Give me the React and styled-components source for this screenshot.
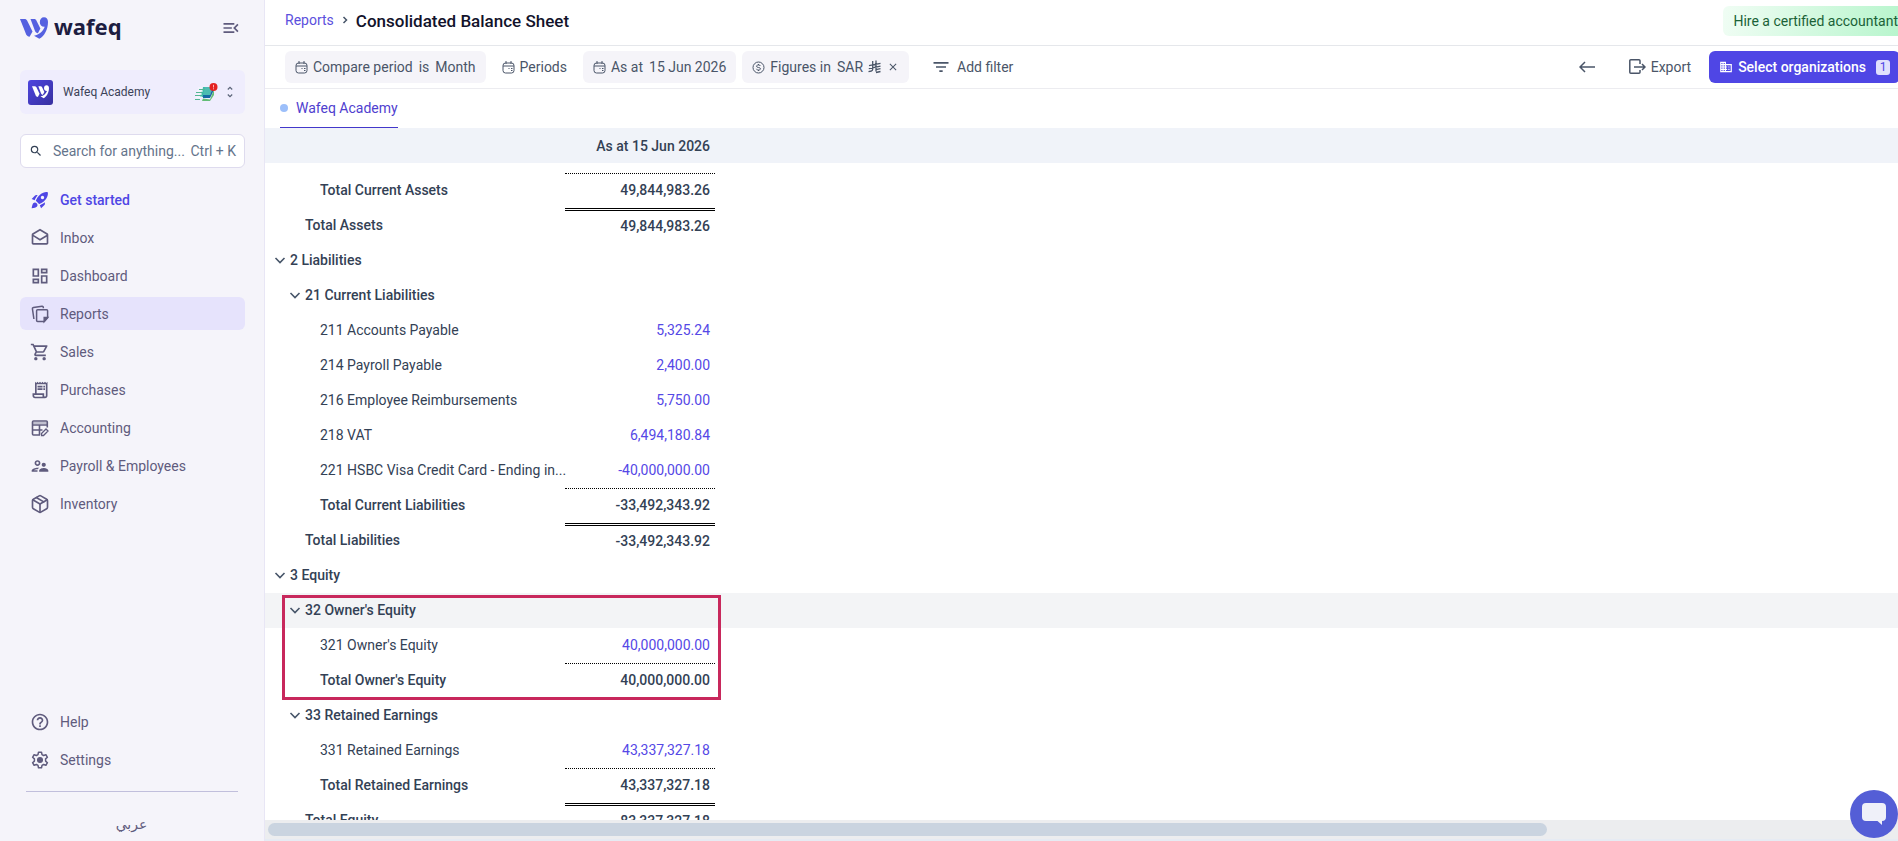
import React, { useLayoutEffect, useRef } from "react";
import styled, { createGlobalStyle, css } from "styled-components";
import {
  MdRocketLaunch,
  MdOutlineDrafts,
  MdOutlineDashboard,
  MdOutlineShoppingCart,
  MdOutlineReceiptLong,
  MdOutlineSupervisorAccount,
  MdHelpOutline,
  MdMenuOpen,
  MdSearch,
  MdFilterList,
  MdDomain,
  MdClose,
} from "react-icons/md";
import { Package } from "lucide-react";

const FONT = 'Roboto, "Liberation Sans", "DejaVu Sans", sans-serif';

const GlobalStyle = createGlobalStyle`
  *, *::before, *::after { box-sizing: border-box; }
  body { margin: 0; background: #fff; overflow: hidden; font: 400 14px/20px ${FONT}; color: #334155; }
  button, input { font: inherit; color: inherit; margin: 0; }
  button { border: 0; background: none; padding: 0; cursor: pointer; }
  a { text-decoration: none; color: inherit; }
  svg { display: block; flex: none; }
`;

const Page = styled.div`
  display: flex;
  height: 100vh;
`;

/* ---------- sidebar ---------- */

const Sidebar = styled.aside`
  flex: none;
  width: 265px;
  display: flex;
  flex-direction: column;
  padding: 0 19px 0 20px;
  background: #f5f4fa;
  border-right: 1px solid #e8e6f5;
  color: #5f5b7d;
`;

const BrandRow = styled.div`
  display: flex;
  align-items: center;
  height: 56px;
  margin-bottom: 14px;
`;

const BrandName = styled.span`
  flex: 1;
  margin-left: 6px;
  padding-bottom: 4px;
  font: 700 22px/28px "Noto Sans", sans-serif;
  color: #1d1d41;
`;

const IconButton = styled.button`
  display: grid;
  place-items: center;
  width: 28px;
  height: 28px;
`;

const Organization = styled.button`
  display: flex;
  align-items: center;
  gap: 6px;
  height: 44px;
  padding: 0 9px 0 8px;
  border-radius: 6px;
  background: #efedfd;
  text-align: left;
  font-size: 12px;
  color: #3b4258;
`;

const OrganizationLogo = styled.span`
  display: grid;
  place-items: center;
  width: 25px;
  height: 25px;
  border-radius: 3px;
  background: linear-gradient(135deg, #4d43e0, #37309f);
`;

const OrganizationName = styled.span`
  flex: 1;
  margin-left: 4px;
`;

const SearchBox = styled.label`
  display: flex;
  align-items: center;
  height: 34px;
  margin: 20px 0 15px;
  padding: 0 8px;
  border: 1px solid #dedbee;
  border-radius: 6px;
  background: #fff;
  color: #64748b;
`;

const SearchInput = styled.input`
  flex: 1;
  min-width: 0;
  margin-left: 10px;
  padding: 0;
  border: 0;
  outline: 0;
  background: none;
  &::placeholder { color: #64748b; opacity: 1; }
`;

const Shortcut = styled.kbd`
  font: inherit;
`;

const Nav = styled.nav`
  display: flex;
  flex-direction: column;
  gap: 5px;
`;

const NavItem = styled.a`
  display: flex;
  align-items: center;
  gap: 10px;
  height: 33px;
  padding: 0 10px;
  border-radius: 6px;
  ${(p) => p.$selected && css`background: #e6e3fc;`}
  ${(p) => p.$accent && css`color: #4f46e5; font-weight: 500;`}
`;

const Divider = styled.hr`
  margin: 15px 6px;
  border: 0;
  border-top: 1px solid #c1bfdc;
  width: 212px;
`;

const LanguageLink = styled.a`
  height: 34px;
  padding-top: 7px;
  margin-right: 2px;
  text-align: center;
  font-family: "DejaVu Sans", sans-serif;
`;

/* ---------- main area ---------- */

const Main = styled.main`
  flex: 1;
  min-width: 0;
  display: flex;
  flex-direction: column;
  overflow: hidden;
`;

const TopBar = styled.header`
  display: flex;
  align-items: center;
  gap: 6px;
  height: 46px;
  padding: 0 0 5px 20px;
  border-bottom: 1px solid #e5e7eb;
  color: #334155;
`;

const Crumb = styled.a`
  color: #5b50dd;
`;

const Title = styled.h1`
  flex: 1;
  margin: 0;
  padding-top: 2px;
  font: 500 17px/24px ${FONT};
  color: #12132b;
`;

const HireButton = styled.button`
  flex: none;
  height: 30px;
  padding: 0 10px;
  margin: 2px -10px 0 0;
  border-radius: 6px;
  background: linear-gradient(100deg, #f0fdf4, #b5f5cb);
  color: #1a6237;
`;

const FilterBar = styled.div`
  display: flex;
  justify-content: space-between;
  align-items: center;
  height: 43px;
  padding-left: 20px;
  border-bottom: 1px solid #ececf0;
  color: #4a5568;
`;

const ChipGroup = styled.div`
  display: flex;
  gap: ${(p) => p.$gap}px;
`;

const Chip = styled.button`
  display: flex;
  align-items: center;
  gap: 6px;
  height: 32px;
  padding: 0 10px;
  border-radius: 6px;
  background: ${(p) => (p.$filled ? "#f5f4f9" : "transparent")};
  white-space: nowrap;
`;

const AddFilter = styled(Chip)`
  padding-left: 16px;
`;

const BackChip = styled(Chip)`
  padding: 0 16px;
`;

const WithIcon = styled.span`
  display: flex;
  align-items: center;
  gap: 5px;
`;

const Spacer = styled.div`
  flex: 1;
`;

const PrimaryButton = styled.button`
  flex: none;
  display: flex;
  align-items: center;
  gap: 5px;
  height: 32px;
  padding: 0 10px;
  margin-right: -2px;
  border-radius: 6px;
  background: #4f46e5;
  color: #fff;
  font-weight: 500;
`;

const CountBadge = styled.span`
  width: 14px;
  margin-left: 5px;
  border-radius: 3px;
  background: #e0e0fd;
  color: #4f46e5;
  font: 400 12px/15px ${FONT};
  text-align: center;
`;

const Tabs = styled.div`
  display: flex;
  height: 39px;
  padding-left: 15px;
`;

const Tab = styled.a`
  display: flex;
  align-items: center;
  gap: 8px;
  border-bottom: 1px solid #4338ca;
  color: #4f40cf;
`;

const Dot = styled.span`
  width: 8px;
  height: 8px;
  border-radius: 50%;
  background: #9cbffa;
`;

/* ---------- report ---------- */

const ReportScroller = styled.div`
  flex: 1;
  min-height: 0;
  overflow: auto;
  scrollbar-width: none;
`;

const Report = styled.table`
  width: 100%;
  table-layout: fixed;
  border-collapse: separate;
  border-spacing: 0;
`;

const HeadCell = styled.th`
  position: sticky;
  top: 0;
  z-index: 2;
  height: 35px;
  padding: 0 5px;
  background: #f0f3f9;
  font-weight: 500;
  text-align: right;
`;

const Row = styled.tr`
  font-weight: ${(p) => (p.$bold ? 500 : 400)};
  background: ${(p) => (p.$hovered ? "#f3f4f6" : "#fff")};
`;

const LabelCell = styled.th`
  position: relative;
  height: 35px;
  padding: 0 0 2px ${(p) => 9 + p.$level * 15}px;
  font-weight: inherit;
  text-align: left;
`;

const Label = styled.div`
  display: flex;
  align-items: center;
  gap: 4px;
  padding-left: ${(p) => (p.$open ? 0 : 16)}px;
  white-space: nowrap;
`;

const Toggle = styled.button`
  width: 12px;
  height: 12px;
  color: #475569;
`;

const rules = {
  dotted: "1px dotted #000",
  double: "3px double #000",
};

const AmountCell = styled.td`
  height: 35px;
  padding: 0 5px 2px;
  border-top: ${(p) => rules[p.$rule] || 0};
  text-align: right;
`;

const AmountLink = styled.a`
  color: #5548e6;
`;

const Highlight = styled.span`
  position: absolute;
  z-index: 1;
  top: 2px;
  left: 17px;
  width: 439px;
  height: 105px;
  border: 3px solid #c8285c;
  pointer-events: none;
`;

const ScrollTrack = styled.div`
  flex: none;
  height: 21px;
  padding: 3px;
  background: #ecedef;
  border-bottom: 2px solid #e6ebf3;
`;

const ScrollThumb = styled.div`
  width: calc(79% - 6px);
  height: 13px;
  border-radius: 7px;
  background: #cad4e0;
`;

const ChatButton = styled.button`
  position: fixed;
  right: 0;
  bottom: 3px;
  z-index: 3;
  display: grid;
  place-items: center;
  width: 48px;
  height: 48px;
  border-radius: 50%;
  background: #545ed6;
`;

/* ---------- drawings ---------- */

const WafeqMark = ({ width, color }) => (
  <svg width={width} viewBox="0 0 28 22" fill={color} aria-hidden="true">
    <path d="M0 2h4.500c1.300 0 2.100.6 2.700 1.800l5.300 10.700-2.900 5.200C7.900 19.600 6.900 18.900 6.100 17.300z" />
    <path d="M10.500 2h3.700c1.100 0 1.700.5 2.200 1.500l4 8-2.500 4.700c-1.400-.1-2.200-.8-2.900-2.200z" />
    <path d="M24 0.300C26.500 0.300 28 2 28 5c0 7.500-3.800 14.500-8.700 16.700l-5.300-3c5.300-1 9.300-4.600 10.700-8.900-2.900.2-4.900-1.700-4.900-4.500 0-3 1.600-5 4.200-5z" />
  </svg>
);

const FastBox = () => (
  <svg width="23" height="19" viewBox="0 0 23 19" aria-hidden="true">
    <path d="M8 4h10l-4 10H5z" fill="#3fb9a8" />
    <path d="M10 4h8l-3 8H8z" fill="#4cbcb2" />
    <path d="M8 12h7l3-8 1 3-4 8H8z" fill="#1668a5" />
    <path d="M8 15.500l7 1 4-10v5.500l-4 6H7z" fill="#63bd76" />
    <path d="M3 5h5M2 8h6M3 11h4M1 14h6" stroke="#f5fbfd" strokeWidth="1" />
    <path d="M4 6.500h6M1 9.500h6M0 12.500h6M0 16.500h5" stroke="#54b592" strokeWidth="1" />
    <circle cx="18.500" cy="4" r="4" fill="#e42222" />
    <path d="M18.500 1.800v2.700M18.500 5.300v1" stroke="#ffb4b4" strokeWidth="1" />
  </svg>
);

const SortIcon = () => (
  <svg width="12" height="12" viewBox="0 0 12 12" fill="none" stroke="#5b6478" strokeWidth="1.200" aria-hidden="true">
    <path d="M3.800 3.500L6 1.300l2.200 2.200M3.800 8.500L6 10.700l2.200-2.200" />
  </svg>
);

const ChevronDownIcon = () => (
  <svg width="12" height="12" viewBox="0 0 12 12" fill="none" stroke="currentColor" strokeWidth="1.600" aria-hidden="true">
    <path d="M1.500 4L6 8.500 10.500 4" />
  </svg>
);

const CrumbArrow = () => (
  <svg width="10" height="10" viewBox="0 0 10 10" fill="none" stroke="#475569" strokeWidth="1.500" aria-hidden="true">
    <path d="M3.500 2l3 3-3 3" />
  </svg>
);

const NotesIcon = () => (
  <svg width="20" height="20" viewBox="0 0 20 20" fill="none" stroke="currentColor" strokeWidth="1.500" aria-hidden="true">
    <path d="M3.900 15L2.400 4.700c-.1-.7.300-1.200 1-1.300L12 2.200c.7-.1 1.200.3 1.300 1v1" />
    <path d="M7.600 5.800h9c.6 0 1 .4 1 1v7l-3.400 3.700H7.600c-.6 0-1-.4-1-1V6.800c0-.6.400-1 1-1z" />
    <path d="M17.600 13.600h-3.400v3.900z" fill="currentColor" />
  </svg>
);

const LedgerIcon = () => (
  <svg width="20" height="20" viewBox="0 0 20 20" fill="none" stroke="currentColor" strokeWidth="1.600" aria-hidden="true">
    <path d="M10 17H3.500a1 1 0 0 1-1-1V4a1 1 0 0 1 1-1h12.800a1 1 0 0 1 1 1v5.500M2.500 7h15M2.500 12h10M9.500 7v10" />
    <path d="M3 4h14v2H3z" fill="currentColor" opacity=".35" stroke="none" />
    <path d="M11.500 17.500v-2l4.500-4.500 2 2-4.500 4.500z" strokeWidth="1.300" />
  </svg>
);

const GearIcon = () => (
  <svg width="20" height="20" viewBox="0 0 20 20" fill="none" stroke="currentColor" strokeWidth="1.500" strokeLinejoin="round" aria-hidden="true">
    <path d="M8.500 2.200h3l.5 2.400 1.600.9 2.300-.8 1.500 2.600-1.800 1.600v2.200l1.800 1.600-1.500 2.600-2.300-.8-1.600.9-.5 2.400h-3L8 15.400l-1.600-.9-2.300.8-1.500-2.600 1.800-1.600V8.900L2.600 7.300l1.500-2.600 2.300.8L8 4.600z" />
    <circle cx="10" cy="10" r="2.300" fill="currentColor" />
  </svg>
);

const CalendarIcon = () => (
  <svg width="13" height="14" viewBox="0 0 13 14" fill="none" stroke="currentColor" aria-hidden="true">
    <rect x="1" y="3" width="11" height="10" rx="2.500" />
    <path d="M1 6h11M4 1v3M9 1v3" />
    <path d="M9 8.500h1.500M9 10.500h1.500M6.500 8.500h1" />
  </svg>
);

const CoinIcon = () => (
  <svg width="13" height="14" viewBox="0 0 13 14" fill="none" stroke="currentColor" aria-hidden="true">
    <circle cx="6.500" cy="7.500" r="5.500" />
    <path d="M8.500 6C8.300 5.300 7.500 5 6.500 5s-2 .4-2 1.200c0 1.800 4 .8 4 2.600 0 .8-.9 1.200-2 1.200s-1.900-.4-2.100-1.100M6.500 4v1M6.500 10v1" />
  </svg>
);

const RiyalIcon = () => (
  <svg width="13" height="14" viewBox="0 0 13 14" fill="none" stroke="currentColor" strokeWidth="1.300" role="img" aria-label="Riyal">
    <path d="M4.700 1v8.200c0 1-.3 1.500-1.400 1.800L.5 11.600M8 .5v11M1 5.600L12.500 3.300M.8 8.700L12.500 6.200M8 9.600l4.500-1M8 12.500l4.500-1" />
  </svg>
);

const BackIcon = () => (
  <svg width="16" height="14" viewBox="0 0 16 14" fill="none" stroke="currentColor" strokeWidth="1.500" aria-hidden="true">
    <path d="M16 7H1M6 2L1 7l5 5" />
  </svg>
);

const ExportIcon = () => (
  <svg width="17" height="16" viewBox="0 0 17 16" fill="none" stroke="currentColor" strokeWidth="1.500" aria-hidden="true">
    <path d="M11 5V1.800a1 1 0 0 0-1-1H1.800a1 1 0 0 0-1 1v11.400a1 1 0 0 0 1 1H10a1 1 0 0 0 1-1V11M5 8h11M13 5l3 3-3 3" />
  </svg>
);

const ChatIcon = () => (
  <svg width="24" height="22" viewBox="0 0 24 22" fill="#eff0f9" aria-hidden="true">
    <path d="M4 0h16a4 4 0 0 1 4 4v10a4 4 0 0 1-4 4v4l-4.500-4H4a4 4 0 0 1-4-4V4a4 4 0 0 1 4-4z" />
  </svg>
);

/* ---------- data ---------- */

const NAV = [
  ["Get started", <MdRocketLaunch size={20} />, { $accent: true }],
  ["Inbox", <MdOutlineDrafts size={20} />],
  ["Dashboard", <MdOutlineDashboard size={20} />],
  ["Reports", <NotesIcon />, { $selected: true }],
  ["Sales", <MdOutlineShoppingCart size={20} />],
  ["Purchases", <MdOutlineReceiptLong size={20} />],
  ["Accounting", <LedgerIcon />],
  ["Payroll & Employees", <MdOutlineSupervisorAccount size={20} />],
  ["Inventory", <Package size={20} strokeWidth={2} />],
];

const ROWS = [
  { level: 2, label: "126 Prepayments", amount: "" },
  { level: 2, label: "Total Current Assets", amount: "49,844,983.26", rule: "dotted", bold: true },
  { level: 1, label: "Total Assets", amount: "49,844,983.26", rule: "double", bold: true },
  { level: 0, label: "2 Liabilities", open: true },
  { level: 1, label: "21 Current Liabilities", open: true },
  { level: 2, label: "211 Accounts Payable", amount: "5,325.24" },
  { level: 2, label: "214 Payroll Payable", amount: "2,400.00" },
  { level: 2, label: "216 Employee Reimbursements", amount: "5,750.00" },
  { level: 2, label: "218 VAT", amount: "6,494,180.84" },
  { level: 2, label: "221 HSBC Visa Credit Card - Ending in...", amount: "-40,000,000.00" },
  { level: 2, label: "Total Current Liabilities", amount: "-33,492,343.92", rule: "dotted", bold: true },
  { level: 1, label: "Total Liabilities", amount: "-33,492,343.92", rule: "double", bold: true },
  { level: 0, label: "3 Equity", open: true },
  { level: 1, label: "32 Owner's Equity", open: true, hovered: true, highlight: true },
  { level: 2, label: "321 Owner's Equity", amount: "40,000,000.00" },
  { level: 2, label: "Total Owner's Equity", amount: "40,000,000.00", rule: "dotted", bold: true },
  { level: 1, label: "33 Retained Earnings", open: true },
  { level: 2, label: "331 Retained Earnings", amount: "43,337,327.18" },
  { level: 2, label: "Total Retained Earnings", amount: "43,337,327.18", rule: "dotted", bold: true },
  { level: 1, label: "Total Equity", amount: "83,337,327.18", rule: "double", bold: true },
];

const ReportRow = ({ row }) => (
  <Row $bold={row.bold || row.open} $hovered={row.hovered}>
    <LabelCell scope="row" $level={row.level}>
      <Label $open={row.open}>
        {row.open && (
          <Toggle aria-label={`Collapse ${row.label}`}>
            <ChevronDownIcon />
          </Toggle>
        )}
        {row.label}
      </Label>
      {row.highlight && <Highlight />}
    </LabelCell>
    <AmountCell $rule={row.rule}>
      {row.bold || !row.amount ? row.amount : <AmountLink href="#">{row.amount}</AmountLink>}
    </AmountCell>
    <td />
  </Row>
);

export default function App() {
  const scroller = useRef(null);
  useLayoutEffect(() => {
    scroller.current.scrollTop = 25;
  }, []);

  return (
    <>
      <GlobalStyle />
      <Page>
        <Sidebar>
          <BrandRow>
            <WafeqMark width={28} color="#5561e0" />
            <BrandName>wafeq</BrandName>
            <IconButton aria-label="Collapse menu"><MdMenuOpen size={20} /></IconButton>
          </BrandRow>
          <Organization>
            <OrganizationLogo><WafeqMark width={17} color="#fff" /></OrganizationLogo>
            <OrganizationName>Wafeq Academy</OrganizationName>
            <FastBox />
            <SortIcon />
          </Organization>
          <SearchBox>
            <MdSearch size={14} color="#334155" />
            <SearchInput aria-label="Search" placeholder="Search for anything..." />
            <Shortcut>Ctrl + K</Shortcut>
          </SearchBox>
          <Nav>
            {NAV.map(([text, icon, state]) => (
              <NavItem key={text} href="#" {...state}>{icon}{text}</NavItem>
            ))}
          </Nav>
          <Spacer />
          <Nav>
            <NavItem href="#"><MdHelpOutline size={20} />Help</NavItem>
            <NavItem href="#"><GearIcon />Settings</NavItem>
          </Nav>
          <Divider />
          <LanguageLink href="#" lang="ar">عربي</LanguageLink>
        </Sidebar>

        <Main>
          <TopBar>
            <Crumb href="#">Reports</Crumb>
            <CrumbArrow />
            <Title>Consolidated Balance Sheet</Title>
            <HireButton>Hire a certified accountant</HireButton>
          </TopBar>
          <FilterBar>
            <ChipGroup $gap={6}>
              <Chip $filled>
                <WithIcon><CalendarIcon />Compare period</WithIcon><span>is</span><span>Month</span>
              </Chip>
              <Chip><WithIcon><CalendarIcon />Periods</WithIcon></Chip>
              <Chip $filled>
                <WithIcon><CalendarIcon />As at</WithIcon><span>15 Jun 2026</span>
              </Chip>
              <Chip $filled>
                <WithIcon><CoinIcon />Figures in</WithIcon>
                <WithIcon>SAR<RiyalIcon /></WithIcon>
                <MdClose size={12} />
              </Chip>
              <AddFilter><MdFilterList size={20} />Add filter</AddFilter>
            </ChipGroup>
            <ChipGroup $gap={8}>
              <BackChip aria-label="Back"><BackIcon /></BackChip>
              <Chip><WithIcon><ExportIcon />Export</WithIcon></Chip>
              <PrimaryButton>
                <MdDomain size={14} />Select organizations<CountBadge>1</CountBadge>
              </PrimaryButton>
            </ChipGroup>
          </FilterBar>
          <Tabs>
            <Tab href="#"><Dot />Wafeq Academy</Tab>
          </Tabs>
          <ReportScroller ref={scroller}>
            <Report>
              <colgroup>
                <col style={{ width: 300 }} />
                <col style={{ width: 150 }} />
                <col />
              </colgroup>
              <thead>
                <tr>
                  <HeadCell aria-label="Account" />
                  <HeadCell scope="col">As at 15 Jun 2026</HeadCell>
                  <HeadCell aria-hidden="true" />
                </tr>
              </thead>
              <tbody>
                {ROWS.map((row) => <ReportRow key={row.label} row={row} />)}
              </tbody>
            </Report>
          </ReportScroller>
          <ScrollTrack><ScrollThumb /></ScrollTrack>
        </Main>
      </Page>
      <ChatButton aria-label="Open chat"><ChatIcon /></ChatButton>
    </>
  );
}
